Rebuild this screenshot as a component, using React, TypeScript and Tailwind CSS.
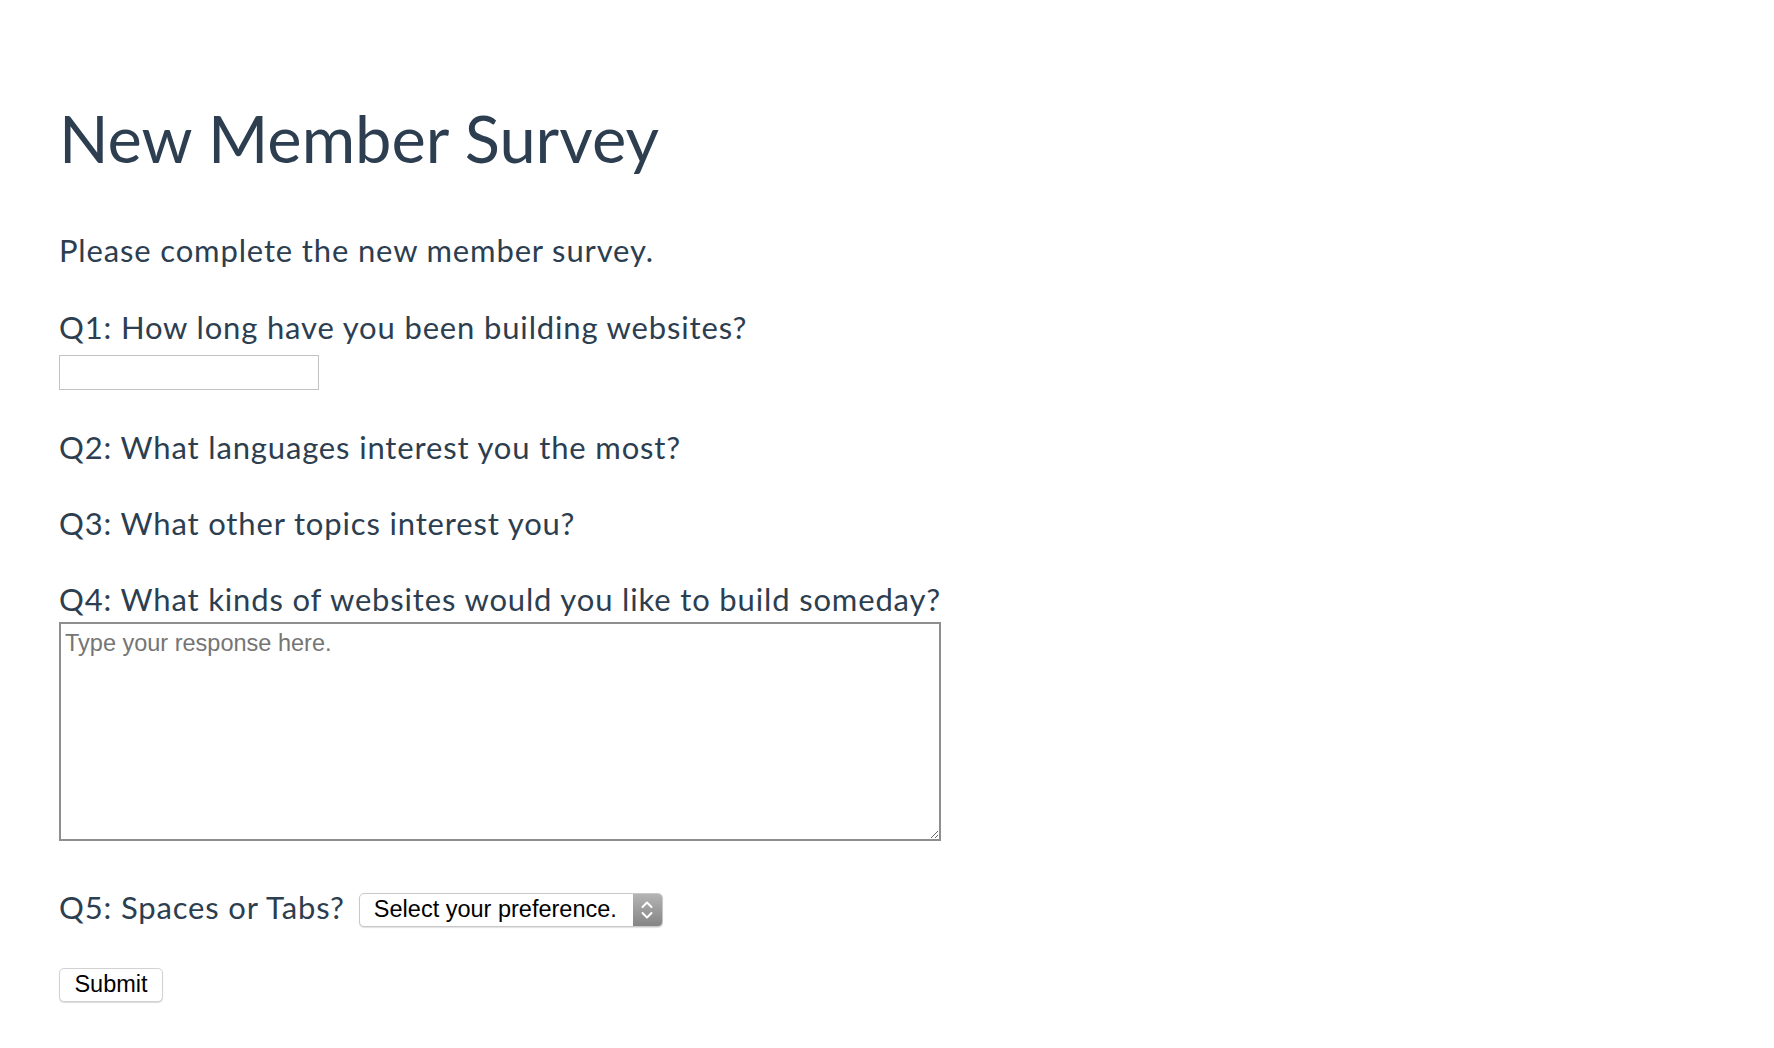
import React from "react";

export default function App() {
  return (
    <div className="min-h-screen w-full bg-white">
      <div className="flex flex-col items-start pl-[59px] pt-[98px] text-[#2c3e50] font-['Lato',sans-serif] font-normal">
        <h1 className="text-[65px] leading-[80px] font-normal">New Member Survey</h1>
        <p className="mt-[54px] text-[31px] leading-[36px] tracking-[0.85px]">Please complete the new member survey.</p>
        <label className="mt-[41px] text-[31px] leading-[36px] tracking-[0.85px]">Q1: How long have you been building websites?</label>
        <input
          type="text"
          className="mt-[10px] h-[35px] w-[260px] border border-[#c2c2c2] bg-white outline-none"
        />
        <label className="mt-[39px] text-[31px] leading-[36px] tracking-[0.85px]">Q2: What languages interest you the most?</label>
        <label className="mt-[40px] text-[31px] leading-[36px] tracking-[0.85px]">Q3: What other topics interest you?</label>
        <label className="mt-[40px] text-[31px] leading-[36px] tracking-[0.85px]">Q4: What kinds of websites would you like to build someday?</label>
        <textarea
          placeholder="Type your response here."
          className="mt-[5px] h-[219px] w-[882px] resize border-2 border-[#8e8e8e] bg-white px-[4px] pt-[2px] font-['Liberation_Sans',Arial,sans-serif] text-[23.5px] font-normal text-black outline-none placeholder:text-[#757575]"
        />
        <div className="mt-[48px] flex items-start">
          <label className="text-[31px] leading-[36px] tracking-[0.85px]">Q5: Spaces or Tabs?</label>
          <div className="ml-[14px] mt-[4px] flex h-[34px] w-[304px] items-stretch overflow-hidden rounded-[5px] border border-[#c9c9c9] bg-white shadow-[0_1px_1px_rgba(0,0,0,0.12)]">
            <div className="flex flex-1 items-center pl-[14px] font-['Liberation_Sans',Arial,sans-serif] text-[23.5px] font-normal text-black">
              Select your preference.
            </div>
            <div className="flex w-[29px] items-center justify-center bg-gradient-to-b from-[#b4b4b4] to-[#858585]">
              <svg width="14" height="24" viewBox="0 0 14 24" fill="none" stroke="white" strokeWidth="2" strokeLinecap="round" strokeLinejoin="round">
                <path d="M2.5 9 L7 4.5 L11.5 9" />
                <path d="M2.5 15 L7 19.5 L11.5 15" />
              </svg>
            </div>
          </div>
        </div>
        <button
          type="button"
          className="mt-[41px] flex h-[34px] w-[104px] items-center justify-center rounded-[5px] border border-[#d2d2d2] bg-white font-['Liberation_Sans',Arial,sans-serif] text-[23.5px] font-normal text-black shadow-[0_1px_1px_rgba(0,0,0,0.15)]"
        >
          Submit
        </button>
      </div>
    </div>
  );
}
